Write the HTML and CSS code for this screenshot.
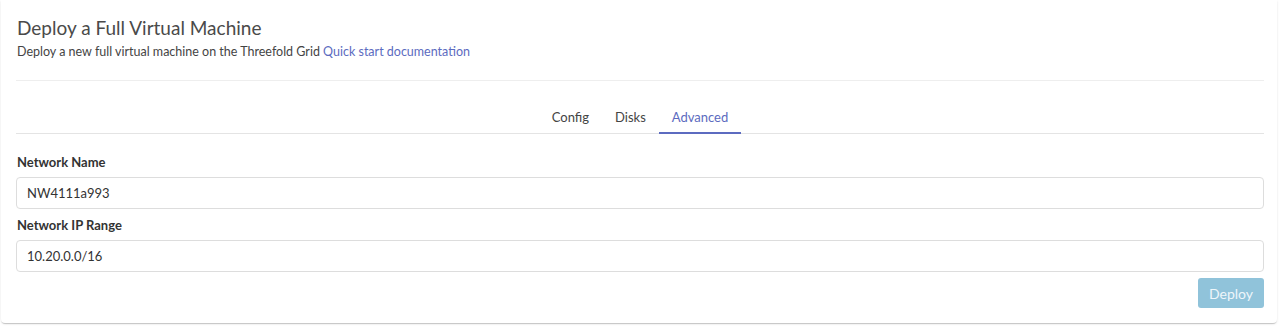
FILE: index.html
```html
<!DOCTYPE html>
<html lang="en">
<head>
  <meta charset="UTF-8">
  <meta name="viewport" content="width=device-width, initial-scale=1">
  <title>Deploy a Full Virtual Machine</title>
  <link rel="stylesheet" href="styles.css">
</head>
<body>
  <div class="card">
    <h1 class="title">Deploy a Full Virtual Machine</h1>
    <p class="subtitle">Deploy a new full virtual machine on the Threefold Grid <a href="#">Quick start documentation</a></p>

    <hr class="divider">

    <div class="tabs">
      <div class="tab">Config</div>
      <div class="tab">Disks</div>
      <div class="tab active">Advanced</div>
    </div>

    <div class="form">
      <label for="netName">Network Name</label>
      <input type="text" id="netName" value="NW4111a993">

      <label for="netRange">Network IP Range</label>
      <input type="text" id="netRange" value="10.20.0.0/16">
    </div>

    <div class="actions">
      <button disabled>Deploy</button>
    </div>
  </div>
</body>
</html>
```

FILE: styles.css
```css
body {
  margin: 0;
  padding: 0 3px 3px 1px;
  background: #fff;
  font-family: Lato, "Open Sans", sans-serif;
  color: #444;
}
.card {
  background: #fff;
  padding: 16px 13px 15px 15px;
  border-radius: 0 0 4px 4px;
  box-shadow: 0 2px 1px -1px rgba(0, 0, 0, 0.12), 0 1px 1px 0 rgba(0, 0, 0, 0.08), 0 1px 3px 0 rgba(0, 0, 0, 0.08);
}
.title {
  margin: 0 0 0 1px;
  font-size: 19px;
  line-height: 24px;
  font-weight: 400;
  color: #4a4a4a;
}
.subtitle {
  margin: 2px 0 0 1px;
  font-size: 12.5px;
  line-height: 20px;
  color: #444;
}
.subtitle a {
  color: #5c6bc0;
  text-decoration: none;
}
.divider {
  border: 0;
  border-top: 1px solid #eee;
  margin: 18px 0 0;
}
.tabs {
  display: flex;
  justify-content: center;
  margin-top: 18px;
  border-bottom: 1px solid #e4e4e4;
}
.tab {
  font-size: 13px;
  line-height: 30px;
  padding: 3px 13px 0;
  color: #444;
  border-bottom: 2px solid transparent;
  margin-bottom: -1px;
}
.tab.active {
  color: #5c6bc0;
  border-bottom-color: #5c6bc0;
}
.form {
  display: flex;
  flex-direction: column;
  margin-top: 18px;
}
label {
  font-size: 13px;
  line-height: 20px;
  font-weight: 700;
  color: #333;
  margin: 0 0 5px 1px;
}
input {
  height: 32px;
  box-sizing: border-box;
  border: 1px solid #ddd;
  border-radius: 4px;
  padding: 0 10px;
  font-family: Lato, "Open Sans", sans-serif;
  font-size: 13px;
  color: #333;
  margin-bottom: 6px;
}
.actions {
  display: flex;
  justify-content: flex-end;
}
button {
  width: 66px;
  height: 30px;
  border: 0;
  border-radius: 3px;
  background: #90c3da;
  color: #eef6fa;
  font-family: Lato, "Open Sans", sans-serif;
  font-size: 14px;
}
```
